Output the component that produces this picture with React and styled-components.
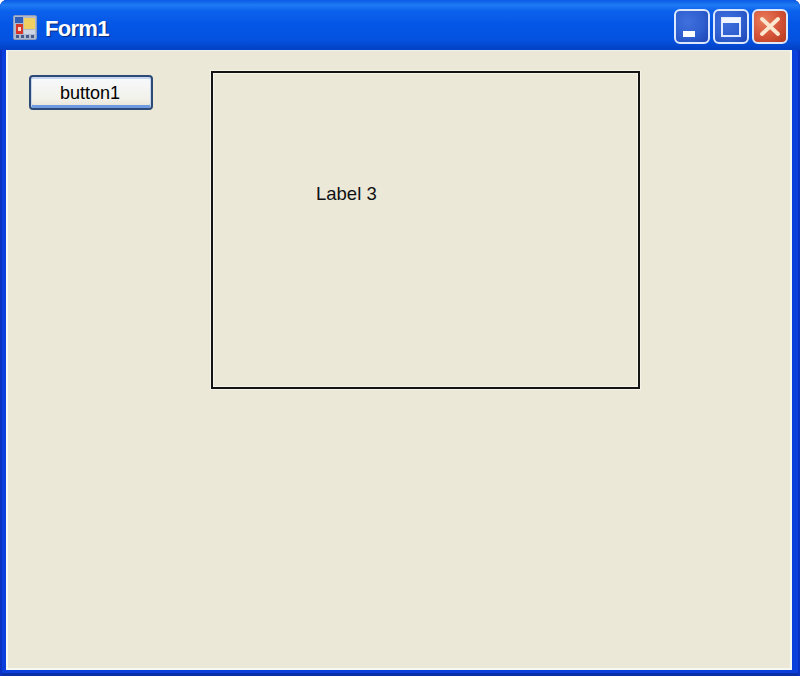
import React from 'react';
import styled, { createGlobalStyle } from 'styled-components';

const GlobalStyle = createGlobalStyle`
  html, body {
    margin: 0;
    padding: 0;
    background: #fff;
  }
`;

function App() {
  return (
    <>
      <GlobalStyle />
      <Window>
        <TitleBar>
          <AppIcon />
          <Title>Form1</Title>
          <Controls>
            <CaptionButton aria-label="Minimize">
              <svg width="32" height="31" viewBox="0 0 32 31">
                <rect x="7" y="20" width="12" height="6" fill="#fff" />
              </svg>
            </CaptionButton>
            <CaptionButton aria-label="Maximize">
              <svg width="32" height="31" viewBox="0 0 32 31">
                <rect x="7" y="7" width="18" height="18" fill="none" stroke="#dfe9ff" strokeWidth="2" />
                <rect x="7" y="7" width="18" height="5" fill="#f2f6ff" />
              </svg>
            </CaptionButton>
            <CaptionButton $close aria-label="Close">
              <svg width="32" height="31" viewBox="0 0 32 31">
                <path d="M8 8 L24 23 M24 8 L8 23" stroke="#fbe6cf" strokeWidth="3.8" strokeLinecap="round" />
              </svg>
            </CaptionButton>
          </Controls>
        </TitleBar>
        <Client>
          <FormButton type="button">button1</FormButton>
          <Panel>
            <PanelLabel>Label 3</PanelLabel>
          </Panel>
        </Client>
      </Window>
    </>
  );
}

function AppIcon() {
  return (
    <svg width="24" height="25" viewBox="0 0 24 25" style={{ flexShrink: 0 }}>
      <rect x="0.5" y="0.5" width="23" height="24" rx="1.5" fill="#aeb9cf" stroke="#8d9cbc" />
      <rect x="2" y="2" width="8" height="6" fill="#2f5fb8" />
      <rect x="11" y="3" width="11" height="11" fill="#f0cf62" />
      <rect x="3" y="9" width="7" height="10" fill="#d8352a" />
      <rect x="5" y="12" width="3" height="4" fill="#f4d9c8" />
      <rect x="11" y="15" width="11" height="4" fill="#cfd5e2" />
      <rect x="3" y="20" width="3" height="3" fill="#44598c" />
      <rect x="8" y="20" width="3" height="3" fill="#44598c" />
      <rect x="13" y="20" width="3" height="3" fill="#44598c" />
      <rect x="18" y="20" width="3" height="3" fill="#44598c" />
    </svg>
  );
}

const Window = styled.div`
  width: 800px;
  height: 676px;
  display: flex;
  flex-direction: column;
  box-sizing: border-box;
  overflow: hidden;
  border-radius: 7px 7px 0 0;
  background: #0a3fdc;
  box-shadow: inset 2px 0 0 #0a32c0, inset -2px 0 0 #0a32c0, inset 0 -3px 0 #0a2fa8;
`;

const TitleBar = styled.div`
  height: 50px;
  flex-shrink: 0;
  box-sizing: border-box;
  display: flex;
  align-items: center;
  padding: 5px 12px 0 13px;
  gap: 8px;
  background: linear-gradient(
    to bottom,
    #0a5ae6 0%,
    #1f7bf5 10%,
    #0c62ec 22%,
    #0456e6 50%,
    #0452e0 80%,
    #0340c4 100%
  );
`;

const Title = styled.span`
  font-family: 'Liberation Sans', Arial, sans-serif;
  font-size: 22px;
  font-weight: bold;
  letter-spacing: -0.7px;
  color: #fff;
  text-shadow: 1px 1px 1px #0a2a80;
  flex: 1;
  margin-top: 2px;
`;

const Controls = styled.div`
  display: flex;
  gap: 3px;
  margin-top: -2px;
`;

const CaptionButton = styled.button`
  width: 36px;
  height: 35px;
  padding: 0;
  box-sizing: border-box;
  border: 2px solid #dce8fb;
  border-radius: 6px;
  display: flex;
  align-items: center;
  justify-content: center;
  background: ${(p) =>
    p.$close
      ? 'radial-gradient(circle at 30% 30%, #e87e5c 0%, #d5553a 50%, #b5381e 100%)'
      : 'radial-gradient(circle at 35% 35%, #3f70dc 0%, #2f5fd0 55%, #1e44b4 100%)'};
`;

const Client = styled.div`
  flex: 1;
  margin: 0 8px 6px 6px;
  box-sizing: border-box;
  display: flex;
  align-items: flex-start;
  gap: 58px;
  padding: 20px 0 0 21px;
  background: #ebe8d8;
  border: 2px solid #f6f8f2;
  border-width: 1px 2px 2px 2px;
  border-top-color: #eef2ee;
`;

const FormButton = styled.button`
  width: 124px;
  height: 35px;
  margin-top: 4px;
  padding: 1px 2px 0 0;
  box-sizing: border-box;
  border: 2px solid #2c4a78;
  border-radius: 4px;
  font-family: 'Liberation Sans', Arial, sans-serif;
  font-size: 18px;
  color: #000;
  background: linear-gradient(to bottom, #f7f9fc 0%, #f2f1ea 70%, #e4e2d6 100%);
  box-shadow: inset 0 1px 0 1px #c6d6ee, inset 0 -2px 0 1px #6f9ae0;
`;

const Panel = styled.div`
  width: 429px;
  height: 318px;
  box-sizing: border-box;
  padding: 109px 0 0 103px;
  border: 2px solid #141414;
  box-shadow: 0 0 0 1px #f6f4ea, inset 0 0 0 1px #f6f4ea;
`;

const PanelLabel = styled.span`
  font-family: 'Liberation Sans', Arial, sans-serif;
  font-size: 18.5px;
  line-height: 24px;
  color: #111;
`;

export default App;
